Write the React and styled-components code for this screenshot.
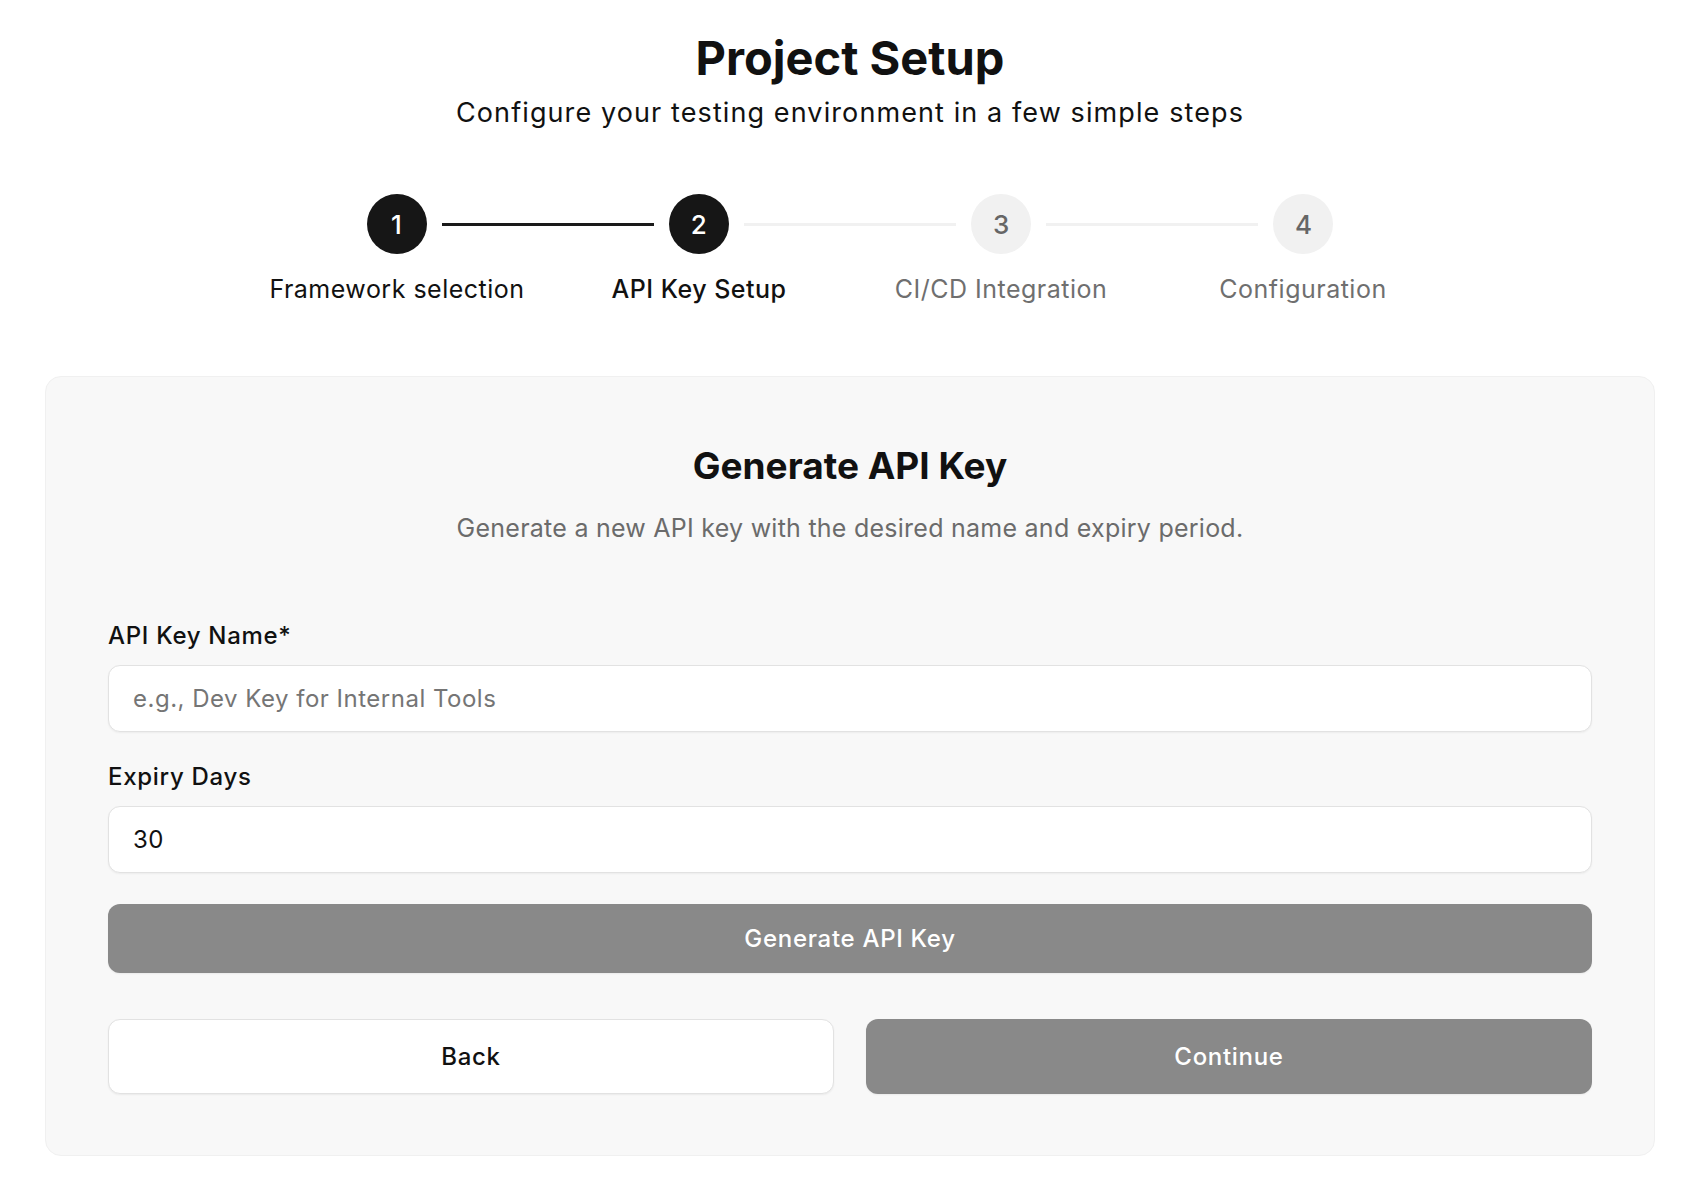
import React, { useState } from 'react'
import styled, { createGlobalStyle } from 'styled-components'

const GlobalStyle = createGlobalStyle`
  * { box-sizing: border-box; }
  body {
    margin: 0;
    background: #ffffff;
    font-family: Inter, "Noto Sans", "Liberation Sans", sans-serif;
    color: #111111;
  }
`

const steps = [
  { n: 1, label: 'Framework selection' },
  { n: 2, label: 'API Key Setup' },
  { n: 3, label: 'CI/CD Integration' },
  { n: 4, label: 'Configuration' },
]
const current = 2

const Page = styled.div`
  padding: 31px 42px 40px 45px;
  display: flex;
  flex-direction: column;
  align-items: center;
`

const Title = styled.h1`
  margin: 0;
  font-size: 47px;
  line-height: 54px;
  font-weight: 700;
  color: #111;
`

const Subtitle = styled.p`
  margin: 12px 0 0;
  font-size: 27px;
  line-height: 32px;
  font-weight: 400;
  letter-spacing: 1.1px;
  color: #111;
`

const Stepper = styled.div`
  margin-top: 65px;
  width: 1208px;
  display: flex;
  flex-direction: column;
  align-items: center;
`

const CircleRow = styled.div`
  width: 967px;
  display: flex;
  align-items: center;
`

const Circle = styled.div`
  width: 60px;
  height: 60px;
  flex: 0 0 60px;
  border-radius: 50%;
  display: flex;
  align-items: center;
  justify-content: center;
  font-size: 26px;
  font-weight: 500;
  background: ${p => (p.$done ? '#161616' : '#f1f1f1')};
  color: ${p => (p.$done ? '#ffffff' : '#666666')};
`

const Connector = styled.div`
  flex: 1;
  height: 3px;
  margin: 0 15px;
  background: ${p => (p.$done ? '#1a1a1a' : '#f1f1f1')};
`

const LabelRow = styled.div`
  margin-top: 19px;
  width: 100%;
  display: grid;
  grid-template-columns: repeat(4, 1fr);
`

const StepLabel = styled.div`
  text-align: center;
  font-size: 25px;
  line-height: 32px;
  letter-spacing: 0.5px;
  color: ${p => (p.$done ? '#111111' : '#6f6f6f')};
  font-weight: ${p => (p.$active ? 500 : 400)};
`

const Card = styled.section`
  margin-top: 71px;
  width: 100%;
  background: #f8f8f8;
  border: 1px solid #f0f0f0;
  border-radius: 16px;
  padding: 67px 62px 61px;
  display: flex;
  flex-direction: column;
`

const CardTitle = styled.h2`
  margin: 0;
  text-align: center;
  font-size: 37px;
  line-height: 44px;
  font-weight: 700;
  color: #111;
`

const CardText = styled.p`
  margin: 24px 0 0;
  text-align: center;
  font-size: 25px;
  line-height: 32px;
  letter-spacing: 0.25px;
  color: #6b6b6b;
`

const Form = styled.form`
  margin-top: 76px;
  display: flex;
  flex-direction: column;
`

const Field = styled.div`
  display: flex;
  flex-direction: column;
  gap: 13px;
  & + & {
    margin-top: 29px;
  }
`

const Label = styled.label`
  font-size: 24px;
  line-height: 32px;
  font-weight: 500;
  letter-spacing: 0.7px;
  color: #111;
`

const Input = styled.input`
  height: 67px;
  width: 100%;
  border: 1.5px solid #e2e2e2;
  border-radius: 12px;
  background: #ffffff;
  padding: 0 24px;
  font-family: inherit;
  font-size: 24px;
  letter-spacing: 0.5px;
  color: #111;
  box-shadow: 0 1px 2px rgba(0, 0, 0, 0.05);
  outline: none;
  &::placeholder {
    color: #757575;
  }
`

const Button = styled.button`
  height: ${p => (p.$tall ? '75px' : '69px')};
  width: 100%;
  border-radius: 12px;
  font-family: inherit;
  font-size: 24px;
  font-weight: 500;
  letter-spacing: 0.7px;
  cursor: pointer;
  border: ${p => (p.$variant === 'outline' ? '1.5px solid #e2e2e2' : 'none')};
  background: ${p => (p.$variant === 'outline' ? '#ffffff' : '#898989')};
  color: ${p => (p.$variant === 'outline' ? '#111111' : '#ffffff')};
  box-shadow: 0 1px 2px rgba(0, 0, 0, 0.06);
`

const GenerateWrap = styled.div`
  margin-top: 31px;
`

const Actions = styled.div`
  margin-top: 46px;
  display: grid;
  grid-template-columns: 1fr 1fr;
  gap: 32px;
`

const App = () => {
  const [name, setName] = useState('')
  const [days, setDays] = useState('30')

  return (
    <>
      <GlobalStyle />
      <Page>
        <Title>Project Setup</Title>
        <Subtitle>Configure your testing environment in a few simple steps</Subtitle>

        <Stepper>
          <CircleRow>
            {steps.map((s, i) => (
              <React.Fragment key={s.n}>
                <Circle $done={s.n <= current}>{s.n}</Circle>
                {i < steps.length - 1 && <Connector $done={s.n < current} />}
              </React.Fragment>
            ))}
          </CircleRow>
          <LabelRow>
            {steps.map(s => (
              <StepLabel key={s.n} $done={s.n <= current} $active={s.n === current}>
                {s.label}
              </StepLabel>
            ))}
          </LabelRow>
        </Stepper>

        <Card>
          <CardTitle>Generate API Key</CardTitle>
          <CardText>Generate a new API key with the desired name and expiry period.</CardText>

          <Form onSubmit={e => e.preventDefault()}>
            <Field>
              <Label htmlFor="keyname">API Key Name*</Label>
              <Input
                id="keyname"
                placeholder="e.g., Dev Key for Internal Tools"
                value={name}
                onChange={e => setName(e.target.value)}
              />
            </Field>
            <Field>
              <Label htmlFor="expiry">Expiry Days</Label>
              <Input id="expiry" value={days} onChange={e => setDays(e.target.value)} />
            </Field>

            <GenerateWrap>
              <Button type="submit">Generate API Key</Button>
            </GenerateWrap>

            <Actions>
              <Button type="button" $variant="outline" $tall>Back</Button>
              <Button type="button" $tall>Continue</Button>
            </Actions>
          </Form>
        </Card>
      </Page>
    </>
  )
}

export default App
